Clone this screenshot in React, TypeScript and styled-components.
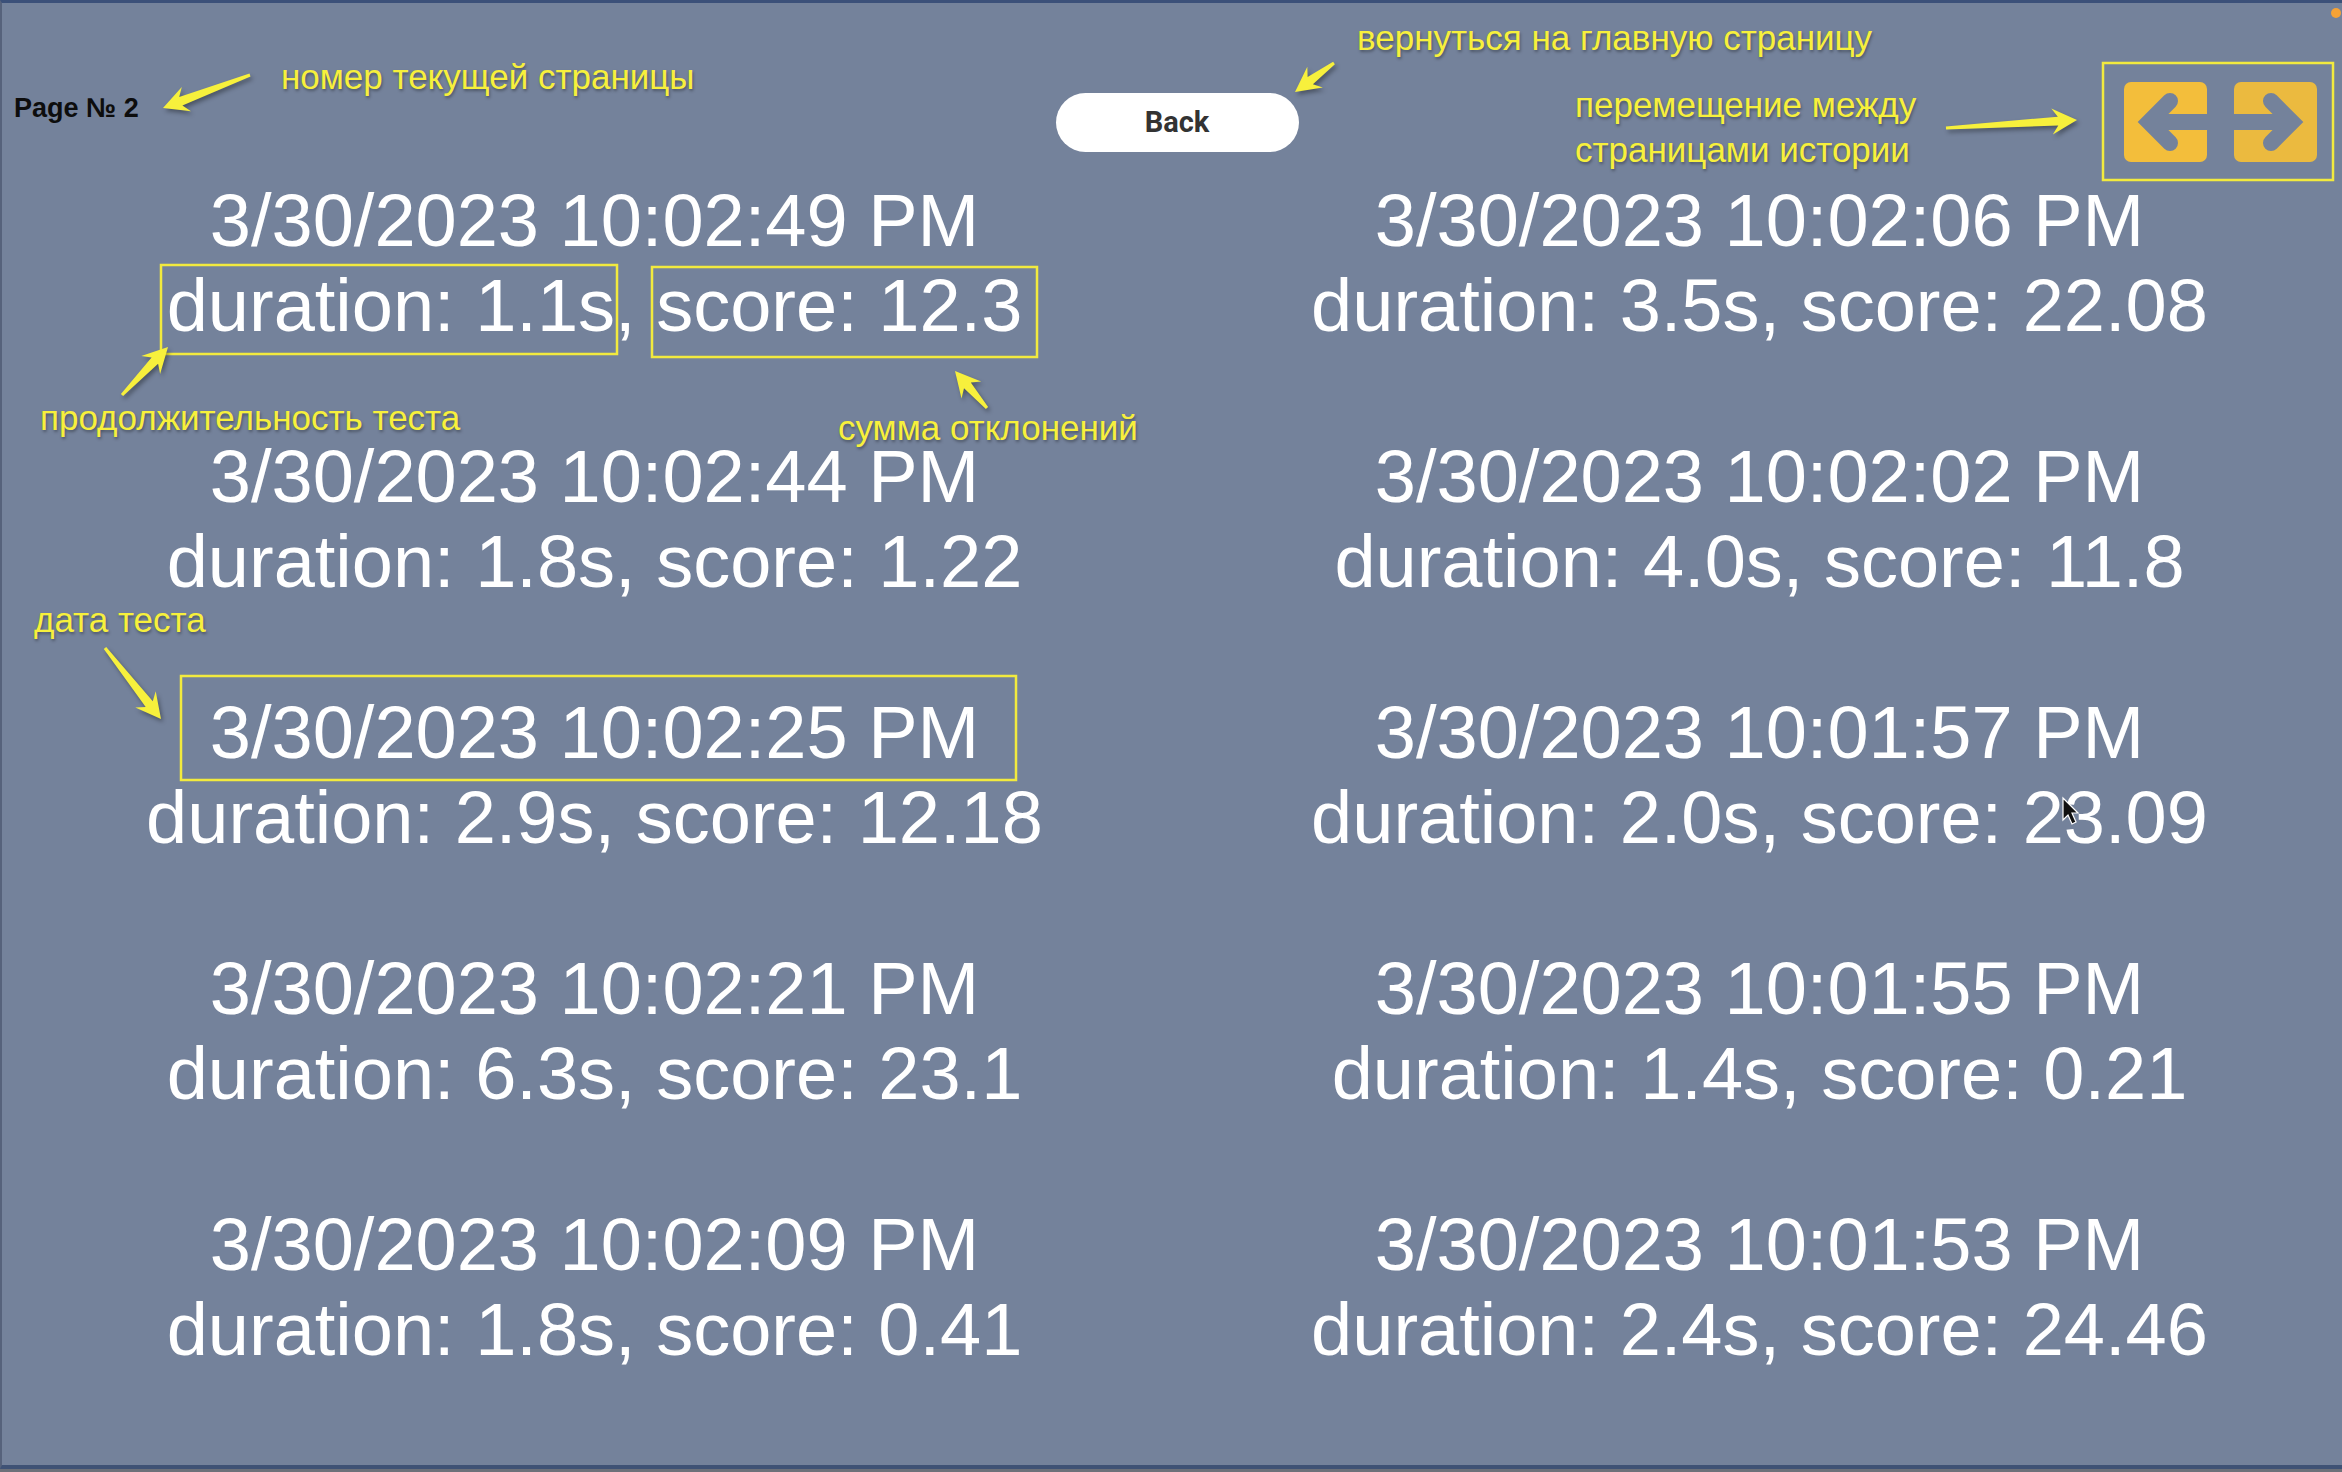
import React from 'react'
import styled, { createGlobalStyle } from 'styled-components'

type HistoryItem = {
  date: string
  duration: number
  score: string
}

const history: Array<HistoryItem> = [
  { date: '3/30/2023 10:02:49 PM', duration: 1.1, score: '12.3' },
  { date: '3/30/2023 10:02:44 PM', duration: 1.8, score: '1.22' },
  { date: '3/30/2023 10:02:25 PM', duration: 2.9, score: '12.18' },
  { date: '3/30/2023 10:02:21 PM', duration: 6.3, score: '23.1' },
  { date: '3/30/2023 10:02:09 PM', duration: 1.8, score: '0.41' },
  { date: '3/30/2023 10:02:06 PM', duration: 3.5, score: '22.08' },
  { date: '3/30/2023 10:02:02 PM', duration: 4.0, score: '11.8' },
  { date: '3/30/2023 10:01:57 PM', duration: 2.0, score: '23.09' },
  { date: '3/30/2023 10:01:55 PM', duration: 1.4, score: '0.21' },
  { date: '3/30/2023 10:01:53 PM', duration: 2.4, score: '24.46' },
]

const BG = '#74829b'
const NOTE = '#f7f03c'

// annotation layer, in page pixels
const notes = [
  { text: 'номер текущей страницы', left: 281, top: 59 },
  { text: 'вернуться на главную страницу', left: 1357, top: 20 },
  { text: 'перемещение между', left: 1575, top: 87 },
  { text: 'страницами истории', left: 1575, top: 132 },
  { text: 'продолжительность теста', left: 40, top: 400 },
  { text: 'сумма отклонений', left: 838, top: 410 },
  { text: 'дата теста', left: 34, top: 602 },
]

const arrows: Array<[number, number, number, number]> = [
  [250, 75, 163, 108],
  [1334, 63, 1295, 92],
  [1946, 128, 2077, 120],
  [122, 395, 168, 347],
  [987, 408, 955, 371],
  [105, 648, 161, 719],
]

const boxes = [
  { x: 161, y: 265, w: 456, h: 89 },
  { x: 652, y: 267, w: 385, h: 90 },
  { x: 181, y: 676, w: 835, h: 104 },
  { x: 2103, y: 63, w: 230, h: 117 },
]

const arrowPoints = (x1: number, y1: number, x2: number, y2: number) => {
  const len = Math.hypot(x2 - x1, y2 - y1)
  const dx = (x2 - x1) / len
  const dy = (y2 - y1) / len
  const p = (along: number, side: number) =>
    `${(x1 + dx * along - dy * side).toFixed(1)},${(y1 + dy * along + dx * side).toFixed(1)}`

  return [
    p(0, 1.5),
    p(len - 19, 4.5),
    p(len - 25, 13),
    p(len, 0),
    p(len - 25, -13),
    p(len - 19, -4.5),
    p(0, -1.5),
  ].join(' ')
}

const GlobalStyle = createGlobalStyle`
  html, body {
    margin: 0;
    padding: 0;
    background: #6c7079;
  }
  body {
    font-family: 'Liberation Sans', Arial, sans-serif;
  }
`

const PagerArrow: React.FC<{ dir: 'left' | 'right'; tone: string }> = ({ dir, tone }) => (
  <svg width="83" height="80" viewBox="0 0 83 80">
    <rect x="0" y="0" width="83" height="80" rx="7" fill={tone} />
    {dir === 'left' ? (
      <g stroke={BG} strokeWidth="16" fill="none" strokeLinejoin="miter">
        <polyline points="46,19 25,40 46,61" strokeLinecap="round" />
        <line x1="25" y1="40" x2="90" y2="40" />
      </g>
    ) : (
      <g stroke={BG} strokeWidth="16" fill="none" strokeLinejoin="miter">
        <polyline points="37,19 58,40 37,61" strokeLinecap="round" />
        <line x1="-10" y1="40" x2="58" y2="40" />
      </g>
    )}
  </svg>
)

const App: React.FC = () => (
  <Frame>
    <GlobalStyle />
    <Screen>
      <Header>
        <PageLabel>Page № 2</PageLabel>
        <BackButton>Back</BackButton>
        <Pager>
          <PagerButton aria-label="previous page">
            <PagerArrow dir="left" tone="#f3be3b" />
          </PagerButton>
          <PagerButton aria-label="next page">
            <PagerArrow dir="right" tone="#ebba3f" />
          </PagerButton>
        </Pager>
      </Header>
      <History>
        {history.map(({ date, duration, score }) => (
          <Entry key={date}>
            <EntryLine>{date}</EntryLine>
            <EntryLine>
              duration: {duration.toFixed(1)}s, score: {score}
            </EntryLine>
          </Entry>
        ))}
      </History>
    </Screen>

    <Overlay width="2342" height="1472" viewBox="0 0 2342 1472">
      <g fill="none" stroke="#f2ea3e" strokeWidth="2.5">
        {boxes.map(({ x, y, w, h }) => (
          <rect key={`${x}-${y}`} x={x} y={y} width={w} height={h} />
        ))}
      </g>
      <g fill={NOTE} style={{ filter: 'drop-shadow(2px 3px 2px rgba(0,0,0,0.35))' }}>
        {arrows.map((a) => (
          <polygon key={a.join('-')} points={arrowPoints(...a)} />
        ))}
      </g>
      <path
        d="M2063 798 L2063 820 L2068 815 L2072 824 L2076 822 L2072 813 L2078 813 Z"
        fill="#111"
        stroke="#fff"
        strokeWidth="1.2"
      />
    </Overlay>

    {notes.map(({ text, left, top }) => (
      <Note key={text} $left={left} $top={top}>
        {text}
      </Note>
    ))}
    <StatusDot />
  </Frame>
)

const Frame = styled.div`
  position: relative;
  width: 100%;
  height: 100vh;
  overflow: hidden;
`

const Screen = styled.div`
  box-sizing: border-box;
  height: calc(100vh - 3px);
  background: ${BG};
  border-top: 3px solid #3b5079;
  border-left: 2px solid #56627b;
  border-bottom: 4px solid #3f5275;
  padding: 79px 0 0 10px;
`

const Header = styled.div`
  display: grid;
  grid-template-columns: 1fr auto 1fr;
  align-items: center;
  height: 80px;
`

const PageLabel = styled.div`
  align-self: start;
  margin: 11px 0 0 2px;
  font-size: 27px;
  font-weight: 700;
  color: #0d0d0d;
`

const BackButton = styled.button`
  width: 243px;
  height: 59px;
  border: none;
  border-radius: 30px;
  background: #ffffff;
  color: #333333;
  font-family: Roboto, 'Liberation Sans', sans-serif;
  font-size: 29px;
  font-weight: 700;
  cursor: pointer;
`

const Pager = styled.div`
  justify-self: end;
  display: flex;
  gap: 27px;
  margin-right: 25px;
`

const PagerButton = styled.button`
  display: block;
  width: 83px;
  height: 80px;
  padding: 0;
  border: none;
  background: none;
  cursor: pointer;
  svg {
    display: block;
  }
`

const History = styled.div`
  display: grid;
  grid-template-columns: 1fr 1fr;
  grid-template-rows: repeat(5, auto);
  grid-auto-flow: column;
  margin-top: 16px;
`

const Entry = styled.div`
  padding-bottom: 86px;
  text-align: center;
  color: #ffffff;
`

const EntryLine = styled.div`
  font-size: 74px;
  line-height: 85px;
  white-space: nowrap;
`

const Overlay = styled.svg`
  position: absolute;
  top: 0;
  left: 0;
  pointer-events: none;
`

const Note = styled.span<{ $left: number; $top: number }>`
  position: absolute;
  left: ${(p) => p.$left}px;
  top: ${(p) => p.$top}px;
  font-size: 35px;
  line-height: 1;
  color: ${NOTE};
  white-space: nowrap;
  text-shadow: 1px 2px 3px rgba(0, 0, 0, 0.35);
  pointer-events: none;
`

const StatusDot = styled.div`
  position: absolute;
  top: 8px;
  right: 1px;
  width: 10px;
  height: 10px;
  border-radius: 50%;
  background: #f6a235;
`

export default App
